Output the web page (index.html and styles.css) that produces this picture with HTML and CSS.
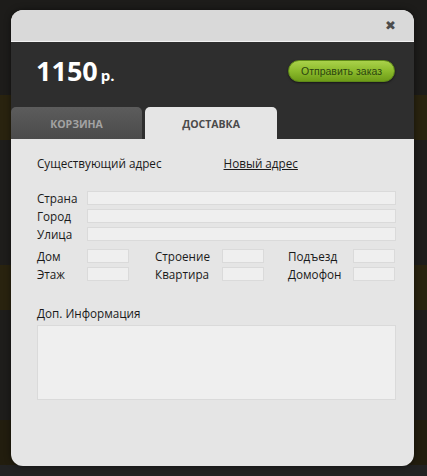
FILE: index.html
```html
<!DOCTYPE html>
<html lang="ru">
<head>
  <meta charset="UTF-8">
  <title>Оформление заказа</title>
  <link rel="stylesheet" href="styles.css">
</head>
<body>
  <div class="modal">
    <div class="modal-top">
      <button class="close" type="button">&#10006;</button>
    </div>

    <div class="modal-head">
      <div class="summary">
        <div class="price">1150<span class="cur">р.</span></div>
        <button class="button-send" type="button">Отправить заказ</button>
      </div>
      <div class="tabs">
        <div class="tab">КОРЗИНА</div>
        <div class="tab active">ДОСТАВКА</div>
      </div>
    </div>

    <div class="modal-body">
      <div class="address-switch">
        <span>Существующий адрес</span>
        <a href="#" class="new-address">Новый адрес</a>
      </div>

      <div class="fields-wide">
        <label>Страна</label><input type="text">
        <label>Город</label><input type="text">
        <label>Улица</label><input type="text">
      </div>

      <div class="fields-short">
        <label>Дом</label><input type="text">
        <label>Строение</label><input type="text">
        <label>Подъезд</label><input type="text">
        <label>Этаж</label><input type="text">
        <label>Квартира</label><input type="text">
        <label>Домофон</label><input type="text">
      </div>

      <div class="extra">
        <label>Доп. Информация</label>
        <textarea></textarea>
      </div>
    </div>
  </div>
</body>
</html>
```

FILE: styles.css
```css
* {
  margin: 0;
  padding: 0;
  box-sizing: border-box;
}

body {
  font-family: "Open Sans", "Liberation Sans", sans-serif;
  color: #1a1a1a;
  /* dimmed page behind the popup */
  background: linear-gradient(to bottom,
    #1d1c1a 0, #1d1c1a 95px,
    #29230f 95px, #29230f 140px,
    #1e1d1b 140px, #1e1d1b 265px,
    #29230f 265px, #29230f 310px,
    #1e1d1b 310px, #1e1d1b 420px,
    #221d0e 420px, #221d0e 465px,
    #222 465px);
  height: 476px;
  overflow: hidden;
  padding: 10px 13px 0 11px;
}

.modal {
  width: 403px;
  border-radius: 12px;
  overflow: hidden;
  background: #e5e5e5;
  box-shadow: 0 0 6px rgba(0, 0, 0, 0.5);
}

.modal-top {
  height: 32px;
  background: #d9d9d9;
  border-bottom: 1px solid #f2f2f2;
  display: flex;
  justify-content: flex-end;
  align-items: center;
  padding-right: 18px;
}

.close {
  border: none;
  background: none;
  color: #4c4c4c;
  font-size: 13px;
  line-height: 1;
  cursor: pointer;
  font-family: "DejaVu Sans", sans-serif;
}

.modal-head {
  background: #2e2e2e;
  padding-top: 15px;
}

.summary {
  display: flex;
  justify-content: space-between;
  align-items: center;
  padding: 0 19px 0 25px;
  height: 27px;
}

.price {
  color: #fff;
  font-size: 27px;
  font-weight: 700;
  line-height: 1;
}

.price .cur {
  font-size: 15px;
  margin-left: 3px;
}

.button-send {
  width: 107px;
  height: 22px;
  border-radius: 11px;
  border: 1px solid #5f8a18;
  background: linear-gradient(to bottom, #a9d14a 0%, #8cbb2c 50%, #6e9c18 100%);
  color: #2c4510;
  font-family: "Liberation Sans", sans-serif;
  font-size: 10.5px;
  box-shadow: 0 1px 2px rgba(0, 0, 0, 0.5);
  cursor: pointer;
}

.tabs {
  display: flex;
  gap: 3px;
  margin-top: 23px;
}

.tab {
  width: 131px;
  height: 32px;
  border-radius: 5px 5px 0 0;
  background: linear-gradient(to bottom, #5c5c5c, #4b4b4b);
  color: #a3a3a3;
  font-size: 10.5px;
  font-weight: 700;
  display: flex;
  align-items: center;
  justify-content: center;
  padding-top: 2px;
}

.tab.active {
  width: 132px;
  background: #e5e5e5;
  color: #4a4a4a;
}

.modal-body {
  padding: 17px 18px 66px 26px;
  font-size: 11.7px;
  line-height: 14px;
}

.address-switch {
  display: flex;
  gap: 62px;
}

.new-address {
  color: #1a1a1a;
  text-decoration: underline;
}

.fields-wide {
  display: grid;
  grid-template-columns: 50px 1fr;
  row-gap: 4px;
  align-items: center;
  margin-top: 21px;
}

input, textarea {
  height: 14px;
  background: #efefef;
  border: 1px solid #dadada;
  font: inherit;
}

.fields-short {
  display: grid;
  grid-template-columns: 50px 68px 67px 66px 65px 42px;
  row-gap: 4px;
  align-items: center;
  margin-top: 8px;
}

.fields-short input {
  width: 42px;
}

.extra {
  margin-top: 25px;
}

.extra label {
  display: block;
  margin-bottom: 5px;
}

.extra textarea {
  display: block;
  width: 359px;
  height: 75px;
  resize: none;
}
```
